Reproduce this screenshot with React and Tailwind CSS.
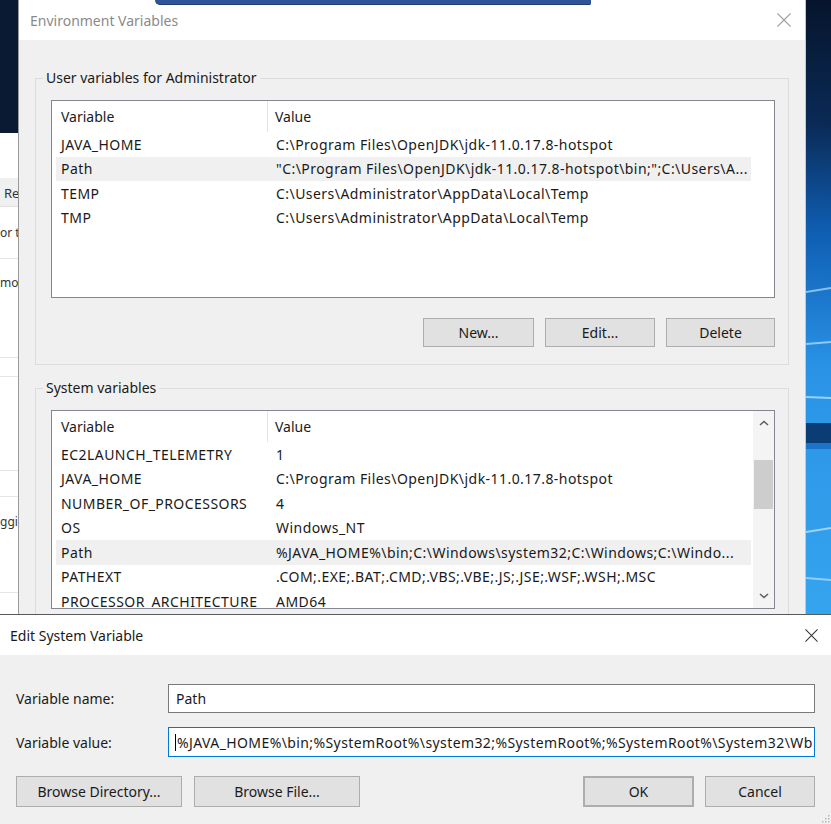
import React from 'react';

const userVars = [
  ['JAVA_HOME', 'C:\\Program Files\\OpenJDK\\jdk-11.0.17.8-hotspot'],
  ['Path', '"C:\\Program Files\\OpenJDK\\jdk-11.0.17.8-hotspot\\bin;";C:\\Users\\A...', true],
  ['TEMP', 'C:\\Users\\Administrator\\AppData\\Local\\Temp'],
  ['TMP', 'C:\\Users\\Administrator\\AppData\\Local\\Temp'],
];

const systemVars = [
  ['EC2LAUNCH_TELEMETRY', '1'],
  ['JAVA_HOME', 'C:\\Program Files\\OpenJDK\\jdk-11.0.17.8-hotspot'],
  ['NUMBER_OF_PROCESSORS', '4'],
  ['OS', 'Windows_NT'],
  ['Path', '%JAVA_HOME%\\bin;C:\\Windows\\system32;C:\\Windows;C:\\Windo...', true],
  ['PATHEXT', '.COM;.EXE;.BAT;.CMD;.VBS;.VBE;.JS;.JSE;.WSF;.WSH;.MSC'],
  ['PROCESSOR_ARCHITECTURE', 'AMD64'],
];

const CloseX = ({ color, size = 14 }) => (
  <svg width={size} height={size} viewBox="0 0 14 14">
    <path d="M0.5 0.5 L13.5 13.5 M13.5 0.5 L0.5 13.5" stroke={color} strokeWidth="1.1" fill="none" />
  </svg>
);

const Chevron = ({ up }) => (
  <svg width="10" height="6" viewBox="0 0 10 6">
    <path d={up ? 'M1 5 L5 1.5 L9 5' : 'M1 1 L5 4.5 L9 1'} stroke="#606060" strokeWidth="1.6" fill="none" />
  </svg>
);

const WinButton = ({ children, className = '' }) => (
  <button className={`flex items-center justify-center bg-[#e1e1e1] border border-[#adadad] ${className}`}>
    {children}
  </button>
);

const VarList = ({ rows, height, scroll }) => (
  <div className={`flex bg-white border border-[#828790] overflow-hidden ${height}`}>
    <div className="flex-1 flex flex-col overflow-hidden">
      <div className="flex h-[31px] shrink-0 items-center">
        <div className="w-[216px] pl-[9px] h-full flex items-center border-r border-[#e5e5e5]">Variable</div>
        <div className="pl-[7px]">Value</div>
      </div>
      <div className="pl-[4px] tracking-[0.45px]">
        {rows.map(([name, value, selected]) => (
          <div
            key={name}
            className={`flex items-center h-[24.5px] w-[695px] whitespace-nowrap ${selected ? 'bg-[#f0f0f0]' : ''}`}
          >
            <div className="w-[212px] pl-[5px] shrink-0">{name}</div>
            <div className="pl-[8px] overflow-hidden">{value}</div>
          </div>
        ))}
      </div>
    </div>
    {scroll && (
      <div className="w-[21px] shrink-0 bg-[#f4f4f4] flex flex-col">
        <div className="h-[24px] flex items-center justify-center">
          <Chevron up />
        </div>
        <div className="flex-1">
          <div className="mt-[25px] mx-[1px] h-[49px] bg-[#cdcdcd]" />
        </div>
        <div className="h-[24px] flex items-center justify-center">
          <Chevron />
        </div>
      </div>
    )}
  </div>
);

const GroupBox = ({ title, children, className = '' }) => (
  <fieldset className={`border border-[#dcdcdc] pl-[15px] pr-[13px] ${className}`}>
    <legend className="ml-[-8px] px-[3px] leading-[20px]">{title}</legend>
    {children}
  </fieldset>
);

// window behind the dialogs, only its right edge shows
const LeftWindow = () => (
  <div className="w-[18px] shrink-0 flex flex-col bg-white text-[13px] text-[#333] overflow-hidden">
    <div className="h-[133px] bg-[#0b1a33] shrink-0" />
    <div className="h-[45px] shrink-0" />
    <div className="h-[29px] shrink-0 bg-[#f0f0f0] border-b border-[#e0e0e0] flex items-center whitespace-nowrap pl-[4px] pt-[4px]">
      Re
    </div>
    <div className="h-[52px] shrink-0 border-b border-[#e5e5e5] flex items-center whitespace-nowrap text-[12px]">
      or t
    </div>
    <div className="h-[99px] shrink-0 border-b border-[#e5e5e5] whitespace-nowrap pt-[15px] text-[12px]">
      mo
    </div>
    <div className="h-[19px] shrink-0 border-b border-[#e5e5e5]" />
    <div className="h-[94px] shrink-0 border-b border-[#e5e5e5]" />
    <div className="h-[26px] shrink-0 border-b border-[#e5e5e5]" />
    <div className="h-[96px] shrink-0 border-b border-[#e5e5e5] whitespace-nowrap pt-[16px] text-[12px]">
      ggi
    </div>
  </div>
);

const Wallpaper = () => (
  <div className="flex-1 overflow-hidden">
    <svg width="25" height="614" viewBox="0 0 25 614" preserveAspectRatio="none">
      <defs>
        <linearGradient id="wp" x1="0" y1="0" x2="0" y2="1">
          <stop offset="0" stopColor="#06152c" />
          <stop offset="0.2" stopColor="#0a2a55" />
          <stop offset="0.38" stopColor="#0f5fb4" />
          <stop offset="0.6" stopColor="#2a93e6" />
          <stop offset="1" stopColor="#35a4ee" />
        </linearGradient>
      </defs>
      <rect width="25" height="614" fill="url(#wp)" />
      <path d="M0 292 L25 288" stroke="#9fd3fb" strokeWidth="2" opacity="0.8" />
      <path d="M0 344 L25 342" stroke="#a9dafc" strokeWidth="2" opacity="0.8" />
      <path d="M0 397 L25 398" stroke="#b6e1fd" strokeWidth="2" opacity="0.8" />
      <rect y="423" width="25" height="20" fill="#0a3d74" />
      <rect y="443" width="25" height="6" fill="#1b74c9" />
      <path d="M0 532 L25 528" stroke="#b6e1fd" strokeWidth="2" opacity="0.8" />
      <path d="M0 578 L25 580" stroke="#b6e1fd" strokeWidth="2" opacity="0.7" />
    </svg>
  </div>
);

const EnvDialog = () => (
  <div className="w-[788px] shrink-0 flex flex-col border-l border-[#9a9a9a] border-r border-r-[#c8c8c8] bg-[#f0f0f0]">
    <div className="h-[40px] shrink-0 bg-white flex items-center justify-between pl-[11px] pr-[14px]">
      <span className="text-[#8a8a8a]">Environment Variables</span>
      <CloseX color="#a0a0a0" size={14} />
    </div>
    <div className="flex-1 px-[16px] overflow-hidden">
      <GroupBox title="User variables for Administrator" className="mt-[28px] pb-[17px]">
        <div className="mt-[12px]">
          <VarList rows={userVars} height="h-[198px]" />
        </div>
        <div className="mt-[20px] flex justify-end gap-[11px]">
          <WinButton className="w-[111px] h-[29px]">New...</WinButton>
          <WinButton className="w-[110px] h-[29px]">Edit...</WinButton>
          <WinButton className="w-[109px] h-[29px]">Delete</WinButton>
        </div>
      </GroupBox>
      <GroupBox title="System variables" className="mt-[13px] pb-[40px]">
        <div className="mt-[12px]">
          <VarList rows={systemVars} height="h-[199px]" scroll />
        </div>
      </GroupBox>
    </div>
  </div>
);

const EditDialog = () => (
  <div className="relative flex-1 flex flex-col border-t border-[#5a5a5a]">
    <div className="h-[40px] shrink-0 bg-white flex items-center justify-between pl-[10px] pr-[13px]">
      <span>Edit System Variable</span>
      <CloseX color="#333333" size={13} />
    </div>
    <div className="flex-1 bg-[#f0f0f0] px-[16px] pt-[29px]">
      <div className="flex items-center">
        <div className="w-[152px] shrink-0">Variable name:</div>
        <div className="flex-1 h-[29px] bg-white border border-[#7a7a7a] flex items-center pl-[7px]">Path</div>
      </div>
      <div className="flex items-center mt-[14px]">
        <div className="w-[152px] shrink-0">Variable value:</div>
        <div className="flex-1 h-[30px] bg-white border border-[#0078d7] flex items-center pl-[6px] overflow-hidden whitespace-nowrap tracking-[0.4px]">
          <span className="w-px h-[17px] bg-black mr-px shrink-0" />
          %JAVA_HOME%\bin;%SystemRoot%\system32;%SystemRoot%;%SystemRoot%\System32\Wb
        </div>
      </div>
      <div className="flex items-center mt-[19px]">
        <WinButton className="w-[166px] h-[31px]">Browse Directory...</WinButton>
        <WinButton className="w-[166px] h-[31px] ml-[12px]">Browse File...</WinButton>
        <div className="flex-1" />
        <WinButton className="w-[111px] h-[31px] border-2 border-[#0078d7]">OK</WinButton>
        <WinButton className="w-[110px] h-[31px] ml-[11px]">Cancel</WinButton>
      </div>
    </div>
    <svg className="absolute right-[1px] bottom-[1px]" width="10" height="10" viewBox="0 0 10 10">
      {[[8, 2], [8, 5], [5, 5], [8, 8], [5, 8], [2, 8]].map(([x, y]) => (
        <rect key={`${x}-${y}`} x={x} y={y} width="1.5" height="1.5" fill="#b8b8b8" />
      ))}
    </svg>
  </div>
);

export default function App() {
  return (
    <div className="relative w-[831px] h-[824px] overflow-hidden flex flex-col bg-[#f0f0f0] font-['Noto_Sans',sans-serif] text-[14px] text-[#1a1a1a]">
      <div className="flex h-[614px] shrink-0">
        <LeftWindow />
        <EnvDialog />
        <Wallpaper />
      </div>
      <EditDialog />
      {/* window edge peeking in over the title bar */}
      <div className="absolute top-0 left-[155px] w-[436px] h-[5px] bg-[#2f5597] border-b border-[#1d3b6e] rounded-bl-[6px] rounded-br-[2px]" />
    </div>
  );
}
